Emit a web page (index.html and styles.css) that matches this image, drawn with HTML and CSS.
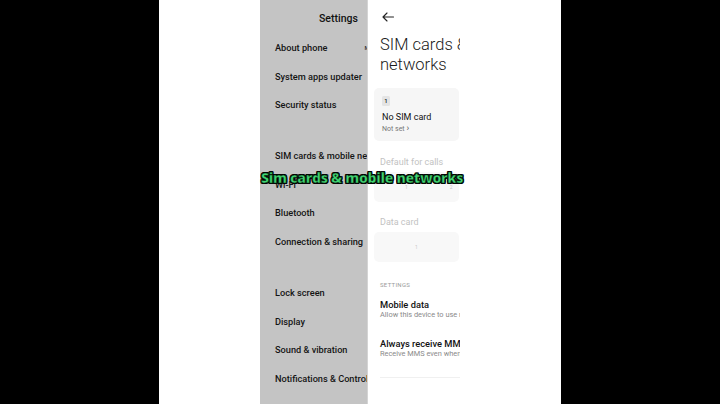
FILE: index.html
```html
<!DOCTYPE html>
<html>
<head>
<meta charset="utf-8">
<link rel="stylesheet" href="styles.css">
</head>
<body>
<div class="phone">
  <div class="gutter"></div>
  <div class="settings">
    <div class="settings-title">Settings</div>
    <div class="group">
      <div class="item"><span class="label">About phone</span><span class="value">MIUI</span></div>
      <div class="item"><span class="label">System apps updater</span></div>
      <div class="item"><span class="label">Security status</span></div>
    </div>
    <div class="group">
      <div class="item"><span class="label">SIM cards &amp; mobile networks</span></div>
      <div class="item"><span class="label">Wi-Fi</span></div>
      <div class="item"><span class="label">Bluetooth</span></div>
      <div class="item"><span class="label">Connection &amp; sharing</span></div>
    </div>
    <div class="group">
      <div class="item"><span class="label">Lock screen</span></div>
      <div class="item"><span class="label">Display</span></div>
      <div class="item"><span class="label">Sound &amp; vibration</span></div>
      <div class="item"><span class="label">Notifications &amp; Control center</span></div>
    </div>
  </div>
  <div class="detail">
    <div class="topbar">
      <svg class="back" width="12" height="10" viewBox="0 0 12 10"><path d="M11.5 5H1.2M5 1L1 5l4 4" fill="none" stroke="#222" stroke-width="1.1" stroke-linecap="round" stroke-linejoin="round"/></svg>
    </div>
    <h1 class="title">SIM cards &amp;<br>networks</h1>
    <div class="card sim">
      <span class="badge">1</span>
      <div class="sim-name">No SIM card</div>
      <div class="sim-sub">Not set <span class="chev">&#x203A;</span></div>
    </div>
    <div class="faint-label">Default for calls</div>
    <div class="card pick"><span class="pick-a">1</span><span class="pick-b">2</span></div>
    <div class="faint-label second">Data card</div>
    <div class="card pick center"><span>1</span></div>
    <div class="section">SETTINGS</div>
    <div class="row">
      <div class="row-title">Mobile data</div>
      <div class="row-sub">Allow this device to use mobile data</div>
    </div>
    <div class="row">
      <div class="row-title">Always receive MMS</div>
      <div class="row-sub">Receive MMS even when mobile data is off</div>
    </div>
    <div class="divider"></div>
  </div>
  <div class="rest"></div>
  <div class="caption">Sim cards &amp; mobile networks</div>
</div>
</body>
</html>
```
FILE: styles.css
```css
html, body {
  margin: 0;
  padding: 0;
  background: #000;
}
body {
  width: 720px;
  height: 404px;
  display: flex;
  justify-content: center;
  overflow: hidden;
  font-family: Roboto, "Noto Sans", sans-serif;
}
.phone {
  position: relative;
  width: 402px;
  height: 404px;
  display: flex;
  background: #fff;
}
.gutter {
  width: 101px;
  flex: none;
  background: #fff;
}
.settings {
  width: 92px;
  flex: none;
  background: #c4c4c4;
  padding-left: 15px;
  overflow: hidden;
  white-space: nowrap;
}
.settings-title {
  height: 34px;
  line-height: 37px;
  padding-left: 44px;
  font-size: 10.5px;
  font-weight: 500;
  color: #111;
}
.group + .group {
  margin-top: 22px;
}
.item {
  height: 28.7px;
  line-height: 28.7px;
  font-size: 9.2px;
  font-weight: 500;
  color: #141414;
  display: flex;
}
.value {
  margin-left: 37px;
  font-size: 6px;
  color: #333;
}
.detail {
  width: 80px;
  flex: none;
  padding-left: 12px;
  background: #fff;
  border-left: 1px solid #d4d4d4;
  overflow: hidden;
  white-space: nowrap;
}
.rest {
  flex: 1;
  background: #fff;
}
.topbar {
  height: 31px;
  display: flex;
  align-items: center;
  padding-left: 2px;
  padding-top: 3px;
  box-sizing: border-box;
}
.title {
  margin: 4px 0 0;
  font-size: 16.5px;
  font-weight: 300;
  line-height: 19.5px;
  color: #1a1a1a;
}
.card {
  margin-left: -6px;
  width: 85px;
  background: #f6f6f6;
  border-radius: 5px;
  box-sizing: border-box;
}
.sim {
  margin-top: 14px;
  height: 53px;
  padding: 8px 8px 0;
}
.badge {
  display: block;
  width: 8px;
  height: 10px;
  line-height: 10px;
  background: #e4e4e4;
  border-radius: 1.5px;
  text-align: center;
  font-size: 6px;
  font-weight: 500;
  color: #222;
}
.sim-name {
  margin-top: 5px;
  font-size: 9px;
  line-height: 12px;
  color: #111;
}
.sim-sub {
  font-size: 7px;
  line-height: 10px;
  color: #777;
}
.chev {
  font-size: 9px;
  color: #555;
}
.faint-label {
  margin-top: 15px;
  height: 12px;
  line-height: 12px;
  font-size: 9px;
  color: #c2c2c2;
}
.faint-label.second {
  margin-top: 14px;
}
.pick {
  margin-top: 4px;
  height: 30px;
  background: #f8f8f8;
  display: flex;
  align-items: center;
  font-size: 5px;
  color: #c8c8c8;
}
.pick-a {
  margin-left: 31px;
}
.pick-b {
  margin-left: 42px;
}
.pick.center {
  justify-content: center;
}
.section {
  margin-top: 19px;
  font-size: 6px;
  line-height: 8px;
  letter-spacing: 0.3px;
  color: #9a9a9a;
}
.row {
  margin-top: 9.5px;
}
.row + .row {
  margin-top: 18px;
}
.row-title {
  font-size: 9.3px;
  font-weight: 500;
  line-height: 11px;
  color: #111;
}
.row-sub {
  font-size: 7.4px;
  line-height: 10px;
  color: #8a8a8a;
}
.divider {
  margin-top: 18px;
  height: 1px;
  background: #f0f0f0;
}
.caption {
  position: absolute;
  left: 102px;
  top: 168px;
  font-family: "Open Sans", Roboto, sans-serif;
  font-size: 14px;
  font-weight: 800;
  letter-spacing: -0.3px;
  color: #3fd671;
  white-space: nowrap;
  -webkit-text-stroke: 0.6px #0a2a12;
  text-shadow: 1px 0 0 #000, -1px 0 0 #000, 0 1px 0 #000, 0 -1px 0 #000, 1px 1px 0 #000, -1px -1px 0 #000, 1px -1px 0 #000, -1px 1px 0 #000;
}
```
